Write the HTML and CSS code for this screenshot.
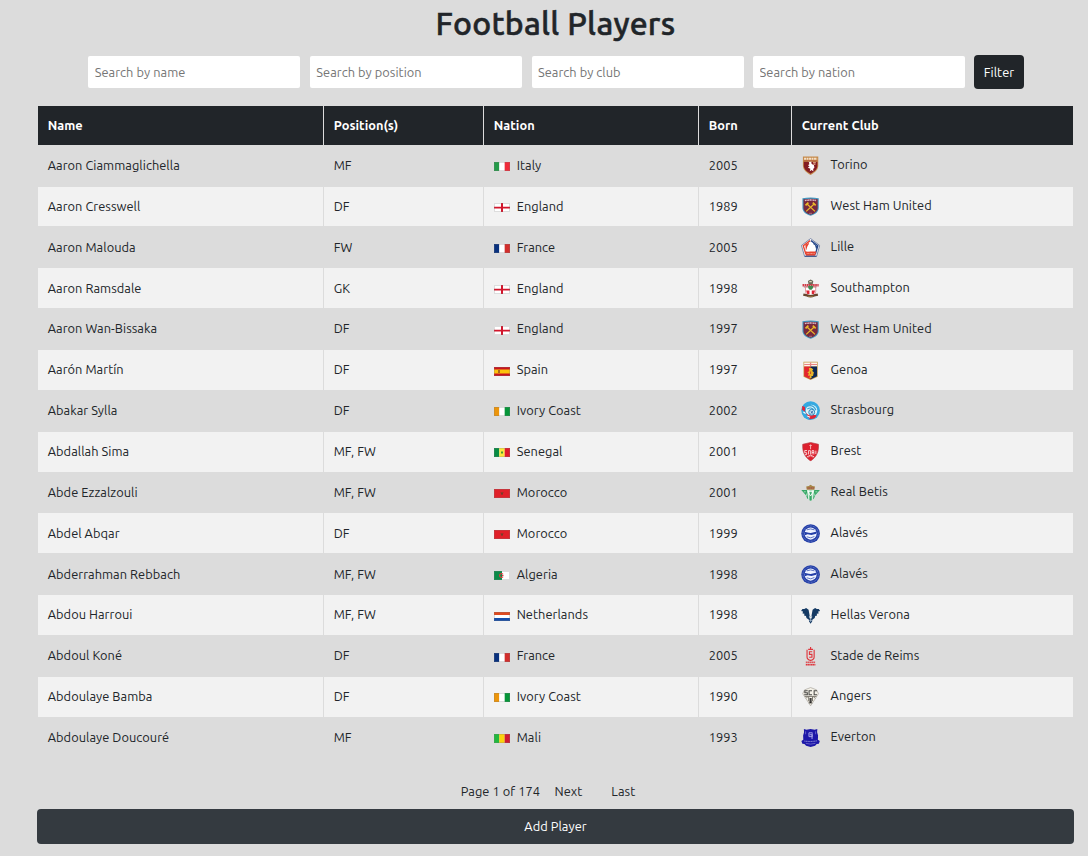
FILE: index.html
```
<!DOCTYPE html>
<html lang="en">
<head>
<meta charset="utf-8">
<title>Football Players</title>
<link rel="stylesheet" href="styles.css">
</head>
<body>
<svg class="sprites" aria-hidden="true">
  <defs>
    <symbol id="italy" viewBox="0 0 16 9"><path fill="#249a49" d="M0 0h5.3v9H0z"/><path fill="#fff" d="M5.3 0h5.4v9H5.3z"/><path fill="#ef2b3a" d="M10.7 0H16v9h-5.3z"/></symbol>
    <symbol id="france" viewBox="0 0 16 9"><path fill="#09317e" d="M0 0h5.3v9H0z"/><path fill="#fff" d="M5.3 0h5.4v9H5.3z"/><path fill="#d22e2c" d="M10.7 0H16v9h-5.3z"/></symbol>
    <symbol id="ivory" viewBox="0 0 16 9"><path fill="#ec950b" d="M0 0h5.3v9H0z"/><path fill="#fff" d="M5.3 0h5.4v9H5.3z"/><path fill="#07963a" d="M10.7 0H16v9h-5.3z"/></symbol>
    <symbol id="mali" viewBox="0 0 16 9"><path fill="#22b83e" d="M0 0h5.3v9H0z"/><path fill="#fcd20d" d="M5.3 0h5.4v9H5.3z"/><path fill="#d01c32" d="M10.7 0H16v9h-5.3z"/></symbol>
    <symbol id="senegal" viewBox="0 0 16 9"><path fill="#078b43" d="M0 0h5.3v9H0z"/><path fill="#fce83c" d="M5.3 0h5.4v9H5.3z"/><path fill="#e01b2a" d="M10.7 0H16v9h-5.3z"/><path fill="#4a9a30" d="M7 3.500h2v2H7z"/></symbol>
    <symbol id="england" viewBox="0 0 16 9"><path fill="#fff" d="M0 0h16v9H0z"/><path fill="#d3162c" d="M7 0h2v9H7zM0 3.800h16v1.700H0z"/></symbol>
    <symbol id="spain" viewBox="0 0 16 9"><path fill="#c9141e" d="M0 0h16v9H0z"/><path fill="#fcc20c" d="M0 2.500h16v4H0z"/><path fill="#a8691b" d="M4 3h2v3H4z"/></symbol>
    <symbol id="morocco" viewBox="0 0 16 9"><path fill="#e02029" d="M0 0h16v9H0z"/><path fill="#63442b" d="M6.200 3.500h3.600L8.700 4.600 9 6l-1-.8L7 6l.3-1.400z"/></symbol>
    <symbol id="algeria" viewBox="0 0 16 9"><path fill="#0b8a48" d="M0 0h8v9H0z"/><path fill="#fff" d="M8 0h8v9H8z"/><path d="M9 3.100a2 2 0 1 0 0 2.800" fill="none" stroke="#e0393f" stroke-width="1.100"/><path fill="#e0393f" d="M8 3.700h1.500v1.600H8z"/></symbol>
    <symbol id="netherlands" viewBox="0 0 16 9"><path fill="#fff" d="M0 0h16v9H0z"/><path fill="#df4b20" d="M0 0h16v3H0z"/><path fill="#164eaa" d="M0 6h16v3H0z"/></symbol>

    <symbol id="torino" viewBox="0 0 20 20">
      <path fill="#c58a4b" d="M2 .6h16v9.500c0 4.500-4.300 7.600-8 9.700-3.700-2.100-8-5.200-8-9.700z"/>
      <path fill="#831c22" d="M2.900 6h14.200v4.200c0 3.900-3.900 6.600-7.100 8.400-3.200-1.800-7.100-4.500-7.100-8.400z"/>
      <path stroke="#f5e1ca" stroke-width="2.200" stroke-dasharray="2 .6" d="M3.200 2.800h13.600"/><path stroke="#b85d3c" stroke-width=".7" d="M3 4.800h14"/>
      <path fill="#fff" d="M8 5.600l1.300 1 1.300-1 .5 2.700 2.300 1.200.6 2.400-1.300 1.600.2 2.600-1.800-1.500-2 1.200.7-2.600-2.600-.9 1.700-1.500-1.700-1.100 1.500-1.200z"/>
      <path fill="#f0c09a" d="M12.500 6.500h3v1h-3zM13 8h2v1h-2z"/>
    </symbol>
    <symbol id="westham" viewBox="0 0 20 20">
      <path fill="#4597bf" d="M1.500 1.300c5.600-1 11.400-1 17 0v9.900c0 4.400-3.900 7.100-8.500 8.400-4.600-1.300-8.500-4-8.500-8.400z"/>
      <path fill="#78293e" d="M2.600 2.300c4.900-.7 9.900-.7 14.800 0v8.800c0 3.700-3.300 6-7.400 7.300-4.100-1.300-7.400-3.600-7.400-7.300z"/>
      <path stroke="#dfbdc9" stroke-width="1.500" stroke-dasharray="1.300 .4" fill="none" d="M4 3.700q6-1 12 0"/>
      <path stroke="#e9b82a" stroke-width="1.300" d="M6 7l8.600 8M14 7l-8.600 8"/><path stroke="#e9b82a" stroke-width="1.800" d="M4.700 8.700L7.700 5.900M15.300 8.700l-3-2.800"/><path stroke="#bd8290" stroke-width=".8" d="M8.500 17h3"/>
    </symbol>
    <symbol id="lille" viewBox="0 0 20 20">
      <path fill="#fff" stroke="#5b6c97" stroke-width=".8" stroke-linejoin="round" d="M10 .6l9.500 7.200-3.300 11.500H3.800L.5 7.800z"/>
      <path fill="none" stroke="#e64431" stroke-width="1.400" d="M9.600 2.700L2.400 8.100l2.700 9"/>
      <path fill="none" stroke="#27498a" stroke-width="1.400" d="M10.400 2.700l7.200 5.400-2.700 9"/>
      <path fill="#e64431" d="M4 14h12l-1.300 4.500H5.300zM4.500 7l4-2-2.100 6.500-1.400 1z"/><path fill="#27498a" d="M12.500 5l4.500 3.500-1 4-2.500-4.500z"/>
      <path fill="#fff" d="M7 8l3-2.500 4.600 2.100 1.100 3.900-3-.6-.8 2.500-5.300.7-.7-3.200z"/>
      <path stroke="#f6a08e" stroke-width="1" stroke-dasharray="1 .5" d="M6 16.200h8.200"/><path stroke="#26407d" stroke-width="1" d="M4 18.900h12"/>
    </symbol>
    <symbol id="southampton" viewBox="0 0 20 20">
      <path fill="#6d6a59" d="M7.200 2.200L10 .5l2.800 1.700-.7 4.100H7.900z"/><path fill="#ddd9be" d="M8.700 2h2.500v1.300H8.700z"/>
      <path stroke="#d23b47" stroke-width="2.600" stroke-dasharray="1.700 .5" d="M1.600 6.500h16.800"/><path stroke="#8c5760" stroke-width="1" stroke-dasharray="1 1" d="M3 8.300h14"/>
      <path fill="#fff" stroke="#c7343f" stroke-width=".5" d="M4.700 8.500h10.600v4.600L14 17H6l-1.300-4z"/><path fill="#3f8a51" d="M7.500 7h5v2.500l-1.500 1.800H9L7.500 9.500z"/>
      <path fill="#dc2634" d="M5.300 12h3.500v3.700H6.500zM11.200 12h3.500l-1.200 3.700h-2.300z"/>
      <path fill="none" stroke="#67452e" stroke-width="2.500" d="M2.400 16.300l3.900.8q3.700 1.700 7.400 0l3.900-.8"/><path stroke="#ad9852" stroke-width=".6" d="M7 18.200h6"/>
    </symbol>
    <symbol id="genoa" viewBox="0 0 20 20">
      <path fill="#c39a45" d="M2.600.7h14.800v15.600L10 19.800l-7.400-3.500z"/><path fill="#fff2eb" d="M3.300 1.500h13.400v4.200H3.300z"/><path fill="#e88581" d="M9.300 1.500h1.400v4.200H9.300zM3.300 3.200h13.400v.9H3.300z"/>
      <path fill="#e3262d" d="M3.300 5.700H10V19l-6.700-3.100z"/><path fill="#0d2854" d="M10 5.700h6.700v10.200L10 19z"/>
      <path fill="#e8b52a" d="M8.200 7.200h2.700l1.800 1.500-1 1.600 1.700 1.400-.9 4-1.700.2.300 1.700H8.700l.9-2.500-2.400.3 1-2.600-1.700-.9 2.200-1.400z"/><path fill="#c44d29" d="M9.500 11h1v2.500h-1z"/>
    </symbol>
    <symbol id="strasbourg" viewBox="0 0 20 20">
      <circle cx="10" cy="10" r="9.700" fill="#35a9e1"/><circle cx="11" cy="10" r="6" fill="#def5fb"/>
      <path fill="#e32436" d="M1 5.800C3 5 4.500 6.200 4 8.700c-.3 2.800 1.500 5.300 4 5.800 3.500 1 6-.6 8 .8-2 2.700-5 3.800-8 3.600z"/>
      <path fill="#35a9e1" d="M.7 8l3 2.600 2.800 4.600 3.300 4.500Q1 19 .7 8z"/><path fill="#e32436" d="M1.500 6l2.500.5v4.500L1 9zM11.500 15.600l5-.6q-1.500 3-4.500 3.500z"/>
      <path fill="none" stroke="#35a1d5" stroke-width="1.200" d="M6 5.500q7-2.300 9.600 4.200M6.500 8.500q4-3 7.200 1.300"/><circle cx="11.200" cy="11.700" r="3.100" fill="#c2e5f3" stroke="#3189bd"/><path stroke="#2b5c9f" stroke-width=".9" d="M10 10.500l2.800 2.700m-2.500 0l2-3"/><path stroke="#fff" stroke-width="1.100" d="M2.500 11.500l2.300 1.500M6.500 15.500l3 1.500"/>
    </symbol>
    <symbol id="brest" viewBox="0 0 20 20">
      <path fill="#dd202e" stroke="#b63a42" stroke-width=".7" d="M1.800 2.400L10 .5l8.200 1.900c.4 7.200-1.500 13-8.200 17.300C3.300 15.400 1.400 9.600 1.800 2.400z"/>
      <path fill="#f6b6b8" d="M9.500 2.600h1v5h-1zM8.600 3.200h2.800V4H8.600z"/>
      <path fill="none" stroke="#fff" stroke-width=".8" d="M6.300 8.900H3.900v2.300h2v2H4M7.800 13V9h2v4M11.500 13V9h1.900v4m-1.900-2h1.900M15.500 9v3.500M6.300 15.500L10 13.700l3.700 1.800"/><path fill="none" stroke="#eb9da0" stroke-width=".7" d="M7 16l3-1.300 3 1.300"/>
    </symbol>
    <symbol id="betis" viewBox="0 0 20 20">
      <path fill="#a78748" d="M6 7l-.6-3.300L8 3.100l2-1.200 2 1.200 2.600.6L14 7z"/><path stroke="#a83a4e" stroke-width="1.100" stroke-dasharray="1.200 .6" d="M6.800 5.200h6.600"/>
      <path fill="#d5efde" d="M.3 7.400h19.400l-5 5.600-1.200 3.200-3.500 2.300-3.500-2.300L5.300 13z"/>
      <path fill="#35a765" d="M.3 7.400h5.900L7.500 17l-1-.8L5.300 13zM13.800 7.400h5.900l-5 5.600-1.200 3.200-1 .8zM8.800 8h2.400v10l-1.200.6-1.200-.6z"/><path fill="none" stroke="#fff" stroke-width=".9" d="M7.200 9h5.600L10 13.500z"/><path stroke="#d5efde" stroke-width=".7" d="M3 9.200h2m10 0h2M5.700 11v2.500M14.300 11v2.500"/>
    </symbol>
    <symbol id="alaves" viewBox="0 0 20 20">
      <circle cx="10" cy="10" r="9.700" fill="#243fa8"/><circle cx="10" cy="10" r="8" fill="none" stroke="#7f92d2" stroke-width=".9" stroke-dasharray=".8 .8"/><circle cx="10" cy="10" r="6.300" fill="#eff3ff"/>
      <path fill="#243fa8" d="M3.400 8.200L8 9l2.200.3 6.400-1.400-.7 2.200-5 1.400-4-.7-2.800.8z"/><path fill="none" stroke="#5a70bd" stroke-width="1" d="M6 6.100q4-1.900 8 0M6 13.300q4.300 2.400 8-.3"/>
    </symbol>
    <symbol id="verona" viewBox="0 0 20 20">
      <path fill="#143963" d="M.1 5.200L1.500 3l2 .2L5.300 2l2.600 1.800L9 10l-.4 4.500-2.900-2-.5-2.200-2-.3.400-1.800-2-.4.500-2zM19.900 5.200L18.500 3l-2 .2L14.700 2l-2.600 1.800L11 10l.4 4.500 2.900-2 .5-2.200 2-.3-.4-1.800 2-.4-.5-2z"/>
      <path fill="#143963" d="M8.300 12.500l1.700.8 1.700-.8V16L10 18.500 8.300 16z"/><path stroke="#a6bacd" stroke-width=".8" d="M8.300 11h3.400M10 12.500v4M8.500 15h3"/>
    </symbol>
    <symbol id="reims" viewBox="0 0 20 20">
      <path fill="none" stroke="#df363d" stroke-width="1.200" d="M6.300 2.800v7.500q0 2.800 3.700 3.700 3.700-.9 3.700-3.700V2.800M7.500 2.500h5M10 0v2.500"/>
      <path fill="none" stroke="#df363d" stroke-width="1.200" d="M11.700 5H8.800v2.700h2.600v3H8.500"/><path stroke="#dc555b" stroke-width="1.700" stroke-dasharray="1.700 .3" d="M5 16h10"/><path stroke="#df363d" stroke-width="1.700" stroke-dasharray="1.500 .3" d="M5 18.500h10"/>
    </symbol>
    <symbol id="angers" viewBox="0 0 20 20">
      <path fill="#f4f1e8" stroke="#a5a197" stroke-width=".7" d="M3.700 3L10 .6 16.300 3l1.900 4L10 19.600 1.800 7z"/>
      <path fill="none" stroke="#4a4946" stroke-width="1.100" d="M7 4H4v2h2.600v2H3.300M11.500 4H8.400v4h3.100M16.700 4h-3v4h3"/>
      <path stroke="#77736b" stroke-width="1" d="M4 9.800h12M5.500 11.700L7 10m1 4.800V10m4 4.800V10m2.500 1.700L13 10M8.500 17l1.500-2.500 1.500 2.500"/><path fill="#3f3d3b" d="M8.900 11.500h2.200v4.700H8.900z"/>
    </symbol>
    <symbol id="everton" viewBox="0 0 20 20">
      <path fill="#1d18a8" d="M3 1l2.800.9L10 1l4.200.9L17 1l-.2 3.300 1 3.500-.2 4.400 2 1.300-1 3-2.200.3-1.700 1.600-4.700 1.300-4.700-1.300-1.700-1.600-2.200-.3-1-3 2-1.300-.2-4.400 1-3.500z"/>
      <path fill="none" stroke="#aaa8ea" stroke-width="1" d="M12 5H8.300v4h3.400V5.500M9 7h2.500v4.500"/><path fill="none" stroke="#9e9be0" stroke-width="1" stroke-dasharray="1.200 .5" d="M3.500 13.600q6.500 1 13-.2"/><path fill="none" stroke="#7773cf" stroke-width=".8" d="M5 16q5 1.600 10 0M4.800 3.500v3M15.200 3.500v3"/>
    </symbol>
  </defs>
</svg>

<main class="page">
  <h1 class="title">Football Players</h1>
  <form class="filters">
    <input class="field" type="text" placeholder="Search by name">
    <input class="field" type="text" placeholder="Search by position">
    <input class="field" type="text" placeholder="Search by club">
    <input class="field" type="text" placeholder="Search by nation">
    <button class="filter-button" type="button">Filter</button>
  </form>

  <table class="players">
    <colgroup><col class="col-name"><col class="col-position"><col class="col-nation"><col class="col-born"><col class="col-club"></colgroup>
    <thead>
      <tr><th>Name</th><th>Position(s)</th><th>Nation</th><th>Born</th><th>Current Club</th></tr>
    </thead>
    <tbody>
      <tr><td>Aaron Ciammaglichella</td><td>MF</td><td><div class="nation"><svg class="flag"><use href="#italy"/></svg>Italy</div></td><td>2005</td><td><div class="club"><svg class="crest"><use href="#torino"/></svg><span>Torino</span></div></td></tr>
      <tr><td>Aaron Cresswell</td><td>DF</td><td><div class="nation"><svg class="flag"><use href="#england"/></svg>England</div></td><td>1989</td><td><div class="club"><svg class="crest"><use href="#westham"/></svg><span>West Ham United</span></div></td></tr>
      <tr><td>Aaron Malouda</td><td>FW</td><td><div class="nation"><svg class="flag"><use href="#france"/></svg>France</div></td><td>2005</td><td><div class="club"><svg class="crest"><use href="#lille"/></svg><span>Lille</span></div></td></tr>
      <tr><td>Aaron Ramsdale</td><td>GK</td><td><div class="nation"><svg class="flag"><use href="#england"/></svg>England</div></td><td>1998</td><td><div class="club"><svg class="crest"><use href="#southampton"/></svg><span>Southampton</span></div></td></tr>
      <tr><td>Aaron Wan-Bissaka</td><td>DF</td><td><div class="nation"><svg class="flag"><use href="#england"/></svg>England</div></td><td>1997</td><td><div class="club"><svg class="crest"><use href="#westham"/></svg><span>West Ham United</span></div></td></tr>
      <tr><td>Aarón Martín</td><td>DF</td><td><div class="nation"><svg class="flag"><use href="#spain"/></svg>Spain</div></td><td>1997</td><td><div class="club"><svg class="crest"><use href="#genoa"/></svg><span>Genoa</span></div></td></tr>
      <tr><td>Abakar Sylla</td><td>DF</td><td><div class="nation"><svg class="flag"><use href="#ivory"/></svg>Ivory Coast</div></td><td>2002</td><td><div class="club"><svg class="crest"><use href="#strasbourg"/></svg><span>Strasbourg</span></div></td></tr>
      <tr><td>Abdallah Sima</td><td>MF, FW</td><td><div class="nation"><svg class="flag"><use href="#senegal"/></svg>Senegal</div></td><td>2001</td><td><div class="club"><svg class="crest"><use href="#brest"/></svg><span>Brest</span></div></td></tr>
      <tr><td>Abde Ezzalzouli</td><td>MF, FW</td><td><div class="nation"><svg class="flag"><use href="#morocco"/></svg>Morocco</div></td><td>2001</td><td><div class="club"><svg class="crest"><use href="#betis"/></svg><span>Real Betis</span></div></td></tr>
      <tr><td>Abdel Abqar</td><td>DF</td><td><div class="nation"><svg class="flag"><use href="#morocco"/></svg>Morocco</div></td><td>1999</td><td><div class="club"><svg class="crest"><use href="#alaves"/></svg><span>Alavés</span></div></td></tr>
      <tr><td>Abderrahman Rebbach</td><td>MF, FW</td><td><div class="nation"><svg class="flag"><use href="#algeria"/></svg>Algeria</div></td><td>1998</td><td><div class="club"><svg class="crest"><use href="#alaves"/></svg><span>Alavés</span></div></td></tr>
      <tr><td>Abdou Harroui</td><td>MF, FW</td><td><div class="nation"><svg class="flag"><use href="#netherlands"/></svg>Netherlands</div></td><td>1998</td><td><div class="club"><svg class="crest"><use href="#verona"/></svg><span>Hellas Verona</span></div></td></tr>
      <tr><td>Abdoul Koné</td><td>DF</td><td><div class="nation"><svg class="flag"><use href="#france"/></svg>France</div></td><td>2005</td><td><div class="club"><svg class="crest"><use href="#reims"/></svg><span>Stade de Reims</span></div></td></tr>
      <tr><td>Abdoulaye Bamba</td><td>DF</td><td><div class="nation"><svg class="flag"><use href="#ivory"/></svg>Ivory Coast</div></td><td>1990</td><td><div class="club"><svg class="crest"><use href="#angers"/></svg><span>Angers</span></div></td></tr>
      <tr><td>Abdoulaye Doucouré</td><td>MF</td><td><div class="nation"><svg class="flag"><use href="#mali"/></svg>Mali</div></td><td>1993</td><td><div class="club"><svg class="crest"><use href="#everton"/></svg><span>Everton</span></div></td></tr>
    </tbody>
  </table>

  <nav class="pagination">
    <span class="page-count">Page 1 of 174</span>
    <a class="page-link">Next</a>
    <a class="page-link">Last</a>
  </nav>
  <button class="add-button" type="button">Add Player</button>
</main>
</body>
</html>
```
FILE: styles.css
```
* {
  box-sizing: border-box;
}

body {
  margin: 0;
  background: #dcdcdc;
  color: #212529;
  font-family: Ubuntu, "Noto Sans", "Open Sans", sans-serif;
  font-size: 12.8px;
  line-height: 19.2px;
  letter-spacing: 0.05px;
}

.sprites {
  display: none;
}

.page {
  display: flex;
  flex-direction: column;
  width: 1037px;
  margin-left: 37px;
}

.title {
  height: 55px;
  margin: 0;
  padding-top: 4px;
  font-size: 32px;
  font-weight: 500;
  line-height: 38px;
  letter-spacing: 0.25px;
  text-align: center;
  -webkit-text-stroke: 0.5px #212529;
}

.filters {
  display: flex;
  align-items: center;
  gap: 9.6px;
  height: 34px;
  margin-left: 51.35px;
}

.field,
.filter-button,
.add-button {
  border: 0;
  font: inherit;
  letter-spacing: inherit;
}

.field {
  width: 212px;
  height: 32px;
  padding: 0 6.4px;
  border-radius: 2px;
  background: #fff;
}

.field::placeholder {
  color: #757575;
}

.filter-button {
  width: 50px;
  height: 34px;
  margin-left: -0.75px;
  padding: 1px 0 0;
  border-radius: 4px;
  background: #212529;
  color: #fff;
}

.players {
  width: 1037px;
  margin-top: 16px;
  border-collapse: collapse;
  table-layout: fixed;
}

.col-name { width: 286px; }
.col-position { width: 160px; }
.col-nation { width: 215px; }
.col-born { width: 93px; }
.col-club { width: 282px; }

.players th,
.players td {
  padding: 0 9.7px;
  border: 1px solid #dcdcdc;
  text-align: left;
  vertical-align: middle;
}

.players th {
  height: 39.75px;
  background: #212529;
  color: #fff;
  font-weight: 700;
}

.players td {
  height: 40.86px;
  padding-bottom: 0.16px;
}

.players tbody tr:nth-child(even) {
  background: #f2f2f2;
}

.nation,
.club {
  display: flex;
  align-items: center;
}

.flag {
  width: 16px;
  height: 9px;
  margin: 2.4px 7px 0 0;
  outline: 1px solid rgba(120, 120, 120, 0.25);
  outline-offset: -1px;
}

.crest {
  width: 19.2px;
  height: 19.2px;
  margin: 0.6px 10px 0 -0.3px;
}

.club span {
  margin-top: -1.43px;
}

.pagination {
  display: flex;
  justify-content: center;
  height: 50.25px;
  padding: 23.6px 15px 0 0;
}

.page-count {
  margin-right: 14.5px;
}

.page-link + .page-link {
  margin-left: 29px;
}

.add-button {
  height: 35px;
  border-radius: 4px;
  background: #343a40;
  color: #fff;
}
```
